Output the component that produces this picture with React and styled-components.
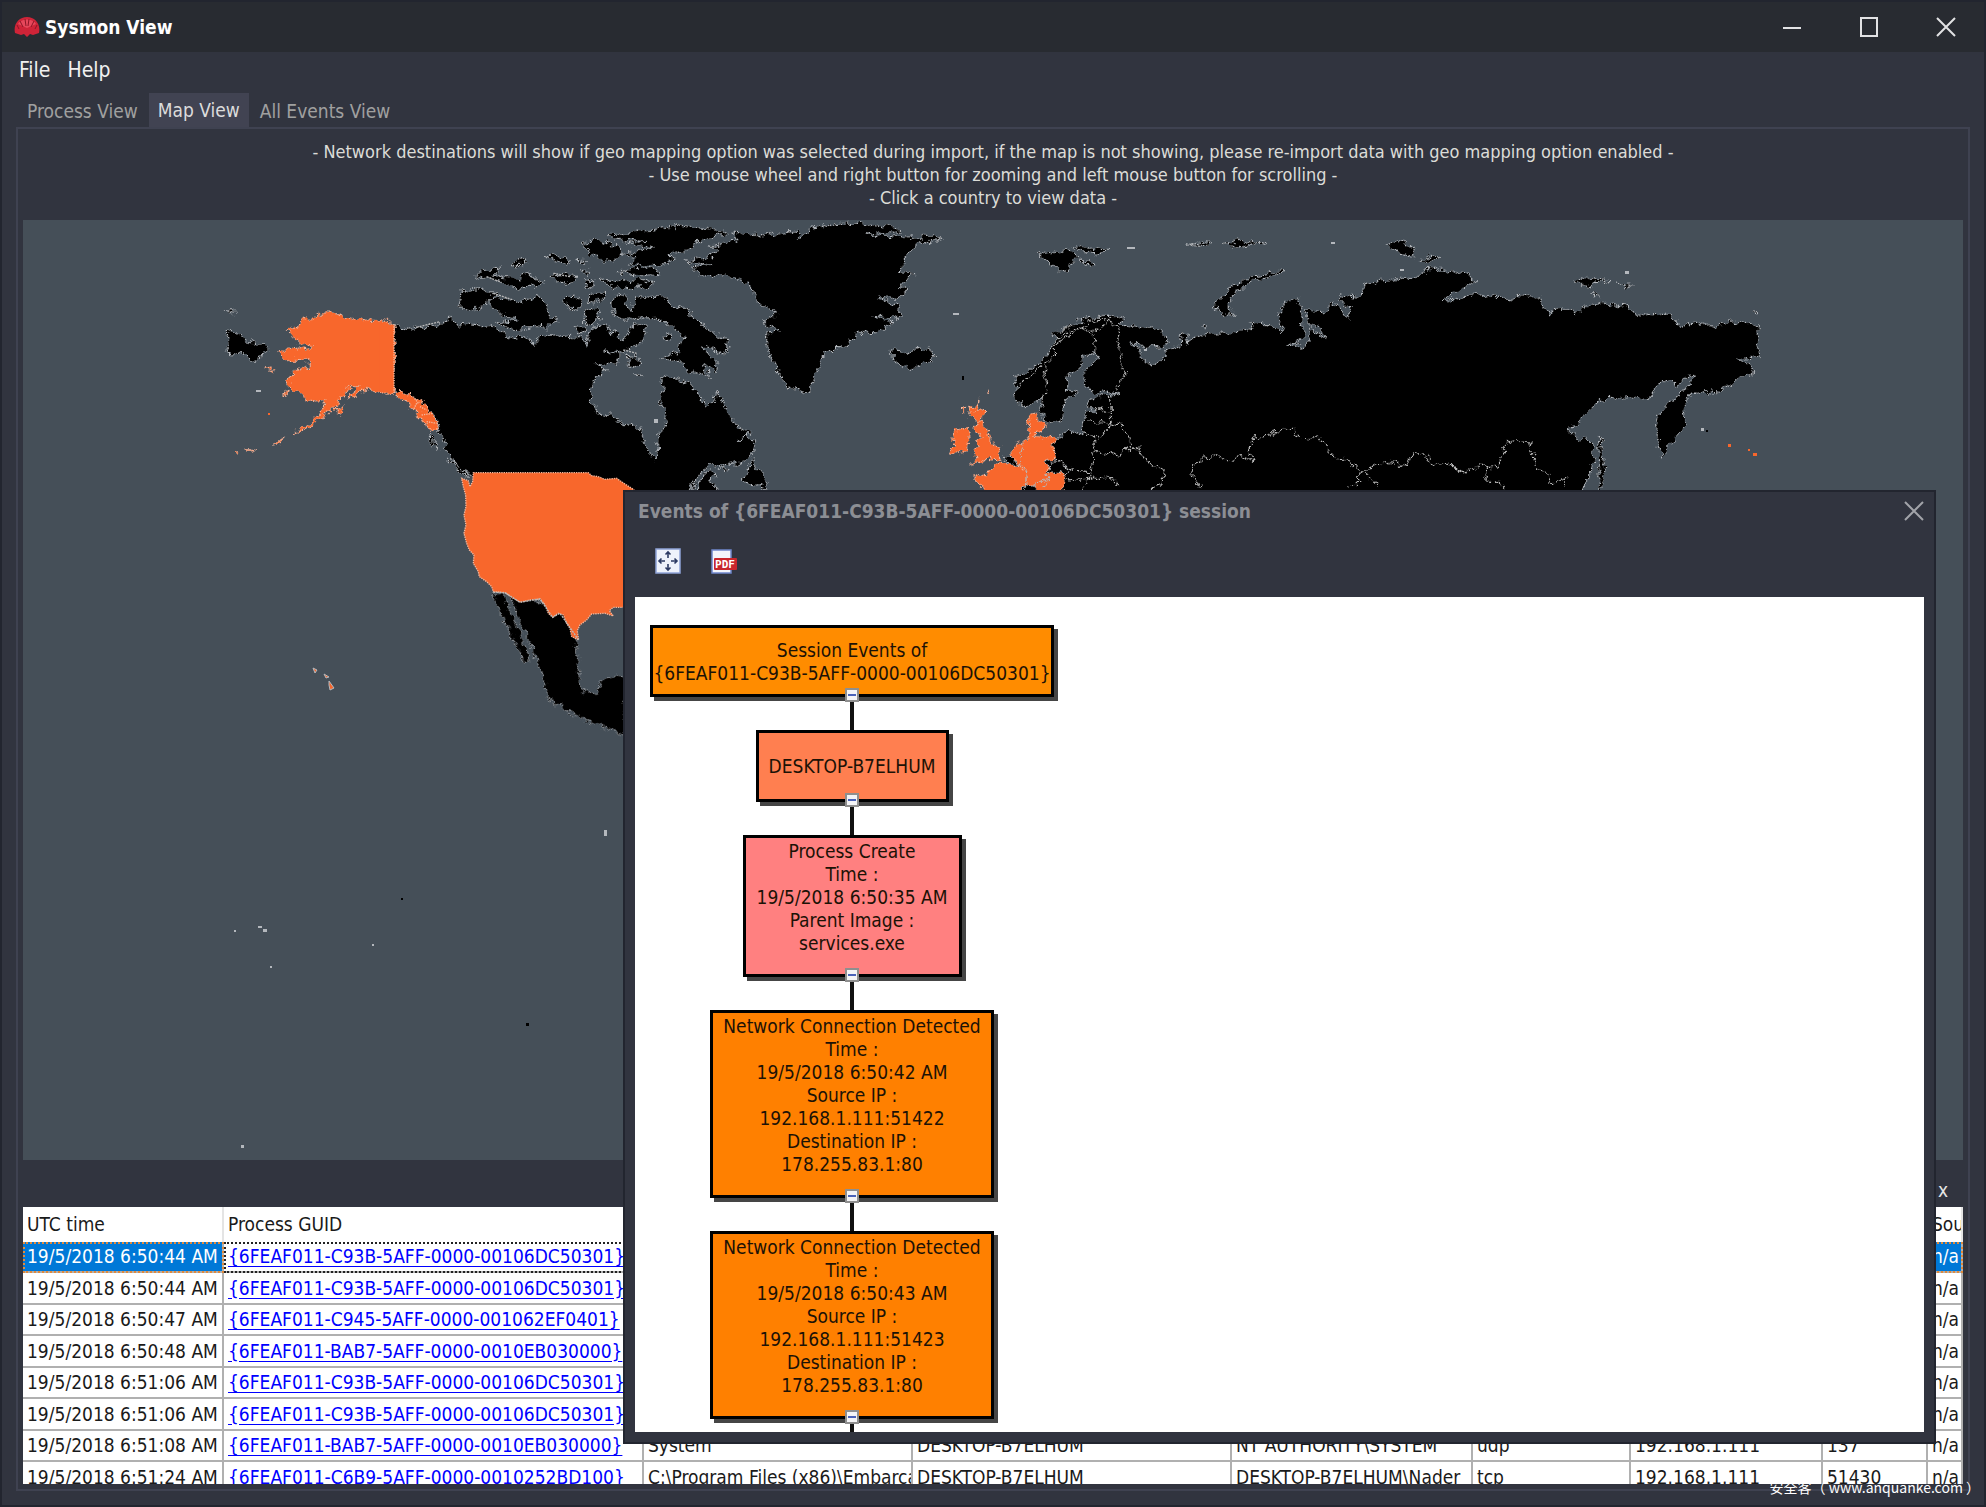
import React from "react";
import styled, { createGlobalStyle } from "styled-components";

const colors = {
  frame: "#22252f",
  titleBar: "#282b31",
  body: "#31343f",
  line: "#3f4251",
  tab: "#414352",
  sea: "#454f58",
  land: "#000000",
  hit: "#f8672c",
  coast: "#b4b8bd",
  select: "#0078d7",
  link: "#0000ff",
};

const GUID = "{6FEAF011-C93B-5AFF-0000-00106DC50301}";

const rows = [
  { time: "19/5/2018 6:50:44 AM", guid: GUID, selected: true },
  { time: "19/5/2018 6:50:44 AM", guid: GUID },
  { time: "19/5/2018 6:50:47 AM", guid: "{6FEAF011-C945-5AFF-0000-001062EF0401}" },
  { time: "19/5/2018 6:50:48 AM", guid: "{6FEAF011-BAB7-5AFF-0000-0010EB030000}" },
  { time: "19/5/2018 6:51:06 AM", guid: GUID },
  { time: "19/5/2018 6:51:06 AM", guid: GUID },
  {
    time: "19/5/2018 6:51:08 AM",
    guid: "{6FEAF011-BAB7-5AFF-0000-0010EB030000}",
    image: "System",
    computer: "DESKTOP-B7ELHUM",
    user: "NT AUTHORITY\\SYSTEM",
    protocol: "udp",
    ip: "192.168.1.111",
    port: "137",
  },
  {
    time: "19/5/2018 6:51:24 AM",
    guid: "{6FEAF011-C6B9-5AFF-0000-0010252BD100}",
    image: "C:\\Program Files (x86)\\Embarcadero",
    computer: "DESKTOP-B7ELHUM",
    user: "DESKTOP-B7ELHUM\\Nader",
    protocol: "tcp",
    ip: "192.168.1.111",
    port: "51430",
  },
];

const columnWidths = [201, 420, 269, 319, 241, 158, 192, 105];

const nodes = [
  { width: 404, height: 72, color: "#ff8c00", pad: 11, lines: ["Session Events of", GUID] },
  { width: 193, height: 72, color: "#ff7f50", pad: 22, lines: ["DESKTOP-B7ELHUM"] },
  {
    width: 219,
    height: 142,
    color: "#ff8080",
    pad: 2,
    lines: ["Process Create", "Time :", "19/5/2018 6:50:35 AM", "Parent Image :", "services.exe"],
  },
  {
    width: 284,
    height: 188,
    color: "#ff8000",
    pad: 2,
    lines: [
      "Network Connection Detected",
      "Time :",
      "19/5/2018 6:50:42 AM",
      "Source IP :",
      "192.168.1.111:51422",
      "Destination IP :",
      "178.255.83.1:80",
    ],
  },
  {
    width: 284,
    height: 188,
    color: "#ff8000",
    pad: 2,
    lines: [
      "Network Connection Detected",
      "Time :",
      "19/5/2018 6:50:43 AM",
      "Source IP :",
      "192.168.1.111:51423",
      "Destination IP :",
      "178.255.83.1:80",
    ],
  },
];

const ShellIcon = () => (
  <svg width="26" height="22" viewBox="0 0 26 22" aria-hidden="true">
    <path
      d="M1 17 C-1 8 5 1 13 1 C21 1 27 8 25 17 L19 19 L16 18 L13 21 L10 18 L7 19 Z"
      fill="#cf2438"
    />
    <path d="M4 8 C7 2 19 2 22 8 L13 12 Z" fill="#e6475a" />
    <path
      d="M5 13 L3 9 M9 11 L6 5 M12 10 L11 3 M14 10 L15 3 M17 11 L20 5 M21 13 L23 9"
      stroke="#8d1526"
      strokeWidth="1"
    />
  </svg>
);

const FitIcon = () => (
  <svg width="26" height="26" viewBox="0 0 26 26" aria-hidden="true">
    <rect x="1" y="1" width="24" height="24" fill="#eef2fb" stroke="#8fa3d8" strokeWidth="1.5" />
    <g stroke="#2c3a63" strokeWidth="1.6" fill="none">
      <path d="M13 4 V10 M10.500 6.500 L13 4 L15.500 6.500" />
      <path d="M13 22 V16 M10.500 19.500 L13 22 L15.500 19.500" />
      <path d="M4 13 H10 M6.500 10.500 L4 13 L6.500 15.500" />
      <path d="M22 13 H16 M19.500 10.500 L22 13 L19.500 15.500" />
    </g>
  </svg>
);

const PdfIcon = () => (
  <svg width="26" height="26" viewBox="0 0 26 26" aria-hidden="true">
    <path d="M1 2 H20 V25 H1 Z" fill="#f4f6fc" stroke="#6f86cc" strokeWidth="1.5" />
    <rect x="3" y="10" width="23" height="12" rx="1" fill="#c8262c" />
    <text
      x="14"
      y="20"
      fill="#ffffff"
      fontFamily="'DejaVu Sans Mono', monospace"
      fontSize="11"
      fontWeight="700"
      textAnchor="middle"
    >
      PDF
    </text>
  </svg>
);

const CloseIcon = () => (
  <svg width="20" height="20" viewBox="0 0 20 20" aria-hidden="true">
    <path d="M1 1 L19 19 M19 1 L1 19" stroke="currentColor" strokeWidth="2" />
  </svg>
);

const MinimizeIcon = () => (
  <svg width="20" height="20" viewBox="0 0 20 20" aria-hidden="true">
    <path d="M1 11 H19" stroke="currentColor" strokeWidth="2" />
  </svg>
);

const MaximizeIcon = () => (
  <svg width="20" height="20" viewBox="0 0 20 20" aria-hidden="true">
    <rect x="2" y="1" width="16" height="18" fill="none" stroke="currentColor" strokeWidth="2" />
  </svg>
);

const WorldMap = () => (
  <MapSvg viewBox="23 220 1940 940" preserveAspectRatio="xMidYMid slice" role="img" aria-label="World map">
    <defs>
      <filter id="rough" x="-5%" y="-5%" width="110%" height="110%" colorInterpolationFilters="sRGB">
        <feTurbulence type="fractalNoise" baseFrequency="0.14" numOctaves="3" seed="7" result="noise" />
        <feDisplacementMap in="SourceGraphic" in2="noise" scale="10" xChannelSelector="R" yChannelSelector="G" />
      </filter>
    </defs>

    {/* north america */}
    <g filter="url(#rough)">
      <Land transform="translate(440 210) scale(0.3333)">
        <path d="M-138 342 L-90 360 L-60 352 L0 345 L30 325 L45 345 L100 343 L150 345 L190 370 L200 382 L260 378 L285 404 L300 378 L340 378 L420 380 L437 402 L445 370 L470 345 L500 350 L515 375 L525 360 L545 395 L560 380 L575 345 L610 345 L620 375 L600 402 L575 408 L555 430 L490 422 L540 435 L535 462 L465 465 L500 480 L470 500 L450 545 L455 575 L470 590 L480 615 L510 615 L560 645 L605 658 L610 700 L630 735 L650 750 L655 720 L650 680 L675 650 L680 610 L662 580 L670 540 L665 500 L720 505 L760 530 L775 555 L795 590 L820 580 L832 545 L850 575 L870 625 L900 655 L930 670 L890 695 L920 680 L945 700 L940 730 L895 762 L810 765 L770 800 L755 840 L750 870 L550 870 L300 830 L90 795 L65 780 L45 755 L20 720 L10 690 L0 650 L-15 620 L-50 590 L-85 560 L-138 545 Z" />
        <path d="M70 240 L130 240 L180 252 L150 268 L125 290 L95 305 L55 288 Z" />
        <path d="M145 270 L190 265 L240 275 L290 260 L320 280 L325 315 L355 335 L330 350 L270 350 L220 362 L170 340 L230 325 L185 315 L150 292 Z" />
        <path d="M100 200 L140 178 L180 175 L160 195 L200 200 L240 210 L265 185 L280 205 L310 212 L290 228 L210 232 L180 210 L130 205 Z" />
        <path d="M215 160 L245 145 L260 155 L230 170 Z M315 135 L350 135 L390 150 L385 162 L335 150 Z M410 150 L440 152 L430 162 Z M330 200 L370 190 L410 200 L400 222 L350 215 Z" />
        <path d="M430 100 L470 90 L530 105 L545 125 L525 152 L490 150 L450 130 Z" />
        <path d="M500 75 L610 65 L700 48 L800 55 L870 68 L800 85 L740 120 L690 130 L700 150 L650 170 L570 165 L590 140 L540 130 L640 115 L560 100 L620 90 L520 88 Z" />
        <path d="M540 185 L600 170 L660 185 L640 195 L560 192 Z M480 205 L530 215 L600 208 L640 215 L630 230 L520 235 Z M425 180 L450 185 L445 195 Z M435 210 L460 210 L462 230 L440 228 Z" />
        <path d="M365 270 L395 255 L425 270 L415 300 L385 290 Z M440 255 L495 248 L490 265 L460 278 L445 272 Z M435 300 L465 295 L480 325 L455 345 L432 330 Z" />
        <path d="M515 285 L525 260 L560 252 L555 285 L575 305 L590 260 L640 262 L665 258 L700 290 L745 300 L770 330 L800 360 L850 385 L870 405 L850 438 L800 405 L790 420 L830 455 L832 485 L790 465 L810 500 L750 485 L720 455 L665 450 L680 435 L720 430 L715 405 L735 385 L700 350 L650 325 L560 330 L520 310 Z" />
        <path d="M675 375 L695 370 L700 388 L680 392 Z M565 435 L590 440 L605 460 L575 475 L560 455 Z M590 492 L608 492 L600 500 Z M400 345 L440 350 L430 375 L410 370 Z" />
        <path d="M770 830 L800 785 L835 795 L805 810 L830 830 L830 870 L770 870 Z M905 810 L925 780 L940 740 L945 775 L970 790 L985 835 L950 825 L915 820 Z M840 770 L870 778 L850 782 Z" />
        <path d="M-30 670 L-15 695 L-10 718 L-28 700 Z M25 750 L60 770 L85 800 L55 785 Z" />
      </Land>

      {/* greenland and iceland */}
      <Land transform="translate(440 210) scale(0.3333)">
        <path d="M730 152 L815 140 L840 120 L810 108 L890 92 L880 70 L980 75 L1070 66 L1085 80 L1110 55 L1190 40 L1260 40 L1360 50 L1385 65 L1280 72 L1420 82 L1495 80 L1490 92 L1430 103 L1395 140 L1380 190 L1425 188 L1410 205 L1380 225 L1405 235 L1375 265 L1310 262 L1380 290 L1380 325 L1300 320 L1355 335 L1345 350 L1300 370 L1250 370 L1220 405 L1190 415 L1150 435 L1130 480 L1105 550 L1045 530 L1010 480 L980 410 L980 370 L1015 365 L970 335 L1010 310 L950 280 L940 235 L905 210 L850 195 L790 198 L750 175 L810 165 Z" />
        <path d="M1350 430 L1365 412 L1385 430 L1420 420 L1470 415 L1485 440 L1420 475 L1380 465 Z" />
      </Land>

      {/* siberian tip west of the date line */}
      <Land transform="translate(200 210) scale(0.3333)">
        <path d="M82 360 L110 368 L150 400 L185 402 L208 415 L165 455 L130 435 L85 430 Z M82 302 L112 304 L90 310 Z" />
      </Land>

      <Land $hit transform="translate(200 210) scale(0.3333)">
        <path d="M582 342 L550 333 L500 330 L440 320 L380 303 L360 315 L310 328 L295 350 L255 362 L280 378 L305 402 L335 407 L320 420 L285 408 L235 428 L260 452 L325 450 L325 470 L275 485 L260 515 L280 540 L310 548 L315 575 L375 572 L365 600 L340 630 L280 668 L300 665 L360 628 L400 595 L425 560 L455 522 L470 530 L445 565 L490 545 L510 530 L540 548 L582 550 L600 545 L640 560 L665 570 L690 605 L715 640 L718 660 L690 660 L660 620 L620 575 L582 556 Z" />
        <path d="M188 470 L222 482 L208 484 Z M245 548 L268 545 L258 553 Z M405 600 L435 588 L420 618 Z M220 702 L255 684 L240 698 Z M140 720 L172 720 L150 724 Z M103 726 L115 730 L105 732 Z" />
      </Land>

      {/* mexico and central america */}
      <Land $fine transform="scale(1.2666)">
        <path d="M389 468 L398 470 L402 482 L410 498 L418 520 L414 522 L407 508 L400 494 L394 482 Z" />
        <path d="M403 470 L420 472 L445 480 L455 503 L456 525 L459 545 L470 548 L476 536 L492 533 L498 545 L492 556 L498 585 L485 576 L470 572 L450 562 L432 552 L430 538 L422 516 L410 490 Z" />
      </Land>
    </g>

    <Land $hit transform="translate(200 210) scale(0.3333)">
      <path d="M582 345 V550 L540 546 V345 Z" stroke="none" />
      <path d="M582 342 V550" />
      <path d="M820 788 H1165 L1175 797 L1195 800 L1215 808 L1250 805 L1275 822 L1300 838 L1320 860 V1190 L1268 1192 L1240 1192 L1228 1202 L1240 1218 L1215 1210 L1175 1212 L1160 1230 L1140 1245 L1132 1262 L1136 1290 L1115 1280 L1110 1255 L1100 1240 L1090 1215 L1075 1210 L1058 1222 L1045 1210 L1036 1185 L1020 1167 L990 1170 L960 1177 L935 1162 L915 1148 L880 1145 L875 1130 L860 1115 L838 1100 L835 1085 L820 1060 L822 1035 L808 1020 L800 1000 L792 970 L798 945 L792 915 L798 890 L797 855 L790 830 L785 805 L805 812 L810 830 L818 815 Z" />
      <path d="M640 560 L655 580 M660 590 L680 600 M665 615 L700 610 M680 635 L710 640 M650 580 L640 600" />
    </Land>

    {/* europe and asia */}
    <g filter="url(#rough)">
      <Land transform="translate(920 210) scale(0.3333)">
        <path d="M280 510 L330 480 L370 450 L390 420 L410 385 L395 370 L440 350 L500 325 L560 315 L610 325 L600 345 L690 352 L725 370 L745 395 L730 415 L680 412 L630 395 L660 420 L665 450 L700 465 L735 440 L735 420 L790 405 L780 370 L805 370 L800 395 L840 380 L870 368 L930 370 L1000 355 L990 340 L1050 345 L1095 365 L1075 310 L1100 275 L1130 262 L1145 290 L1145 350 L1155 370 L1140 395 L1100 405 L1140 415 L1170 390 L1170 352 L1215 385 L1200 350 L1165 345 L1160 300 L1210 305 L1240 280 L1285 325 L1290 290 L1250 265 L1260 255 L1320 262 L1335 222 L1400 210 L1490 200 L1545 170 L1580 188 L1640 190 L1665 215 L1610 245 L1565 275 L1660 255 L1720 255 L1770 270 L1805 258 L1860 265 L1870 295 L1890 315 L1910 295 L1980 305 L2010 280 L2060 277 L2090 290 L2125 290 L2150 315 L2250 313 L2280 345 L2360 342 L2390 355 L2410 335 L2480 340 L2515 350 V440 L2450 447 L2490 460 L2508 495 L2480 490 L2440 515 L2395 548 L2310 550 L2290 600 L2295 640 L2260 690 L2225 740 L2212 680 L2210 620 L2260 570 L2310 525 L2330 495 L2300 500 L2270 530 L2260 512 L2225 512 L2180 570 L2130 560 L2040 568 L1990 625 L1945 660 L1975 690 L2005 680 L2022 710 L2015 780 L1985 840 V870 H370 L385 790 L380 755 L405 745 L400 690 L445 665 L490 672 L485 635 L500 600 L530 610 L505 580 L525 562 L600 548 L560 545 L520 550 L495 535 L490 490 L540 435 L520 425 L490 440 L480 475 L440 500 L440 540 L475 545 L430 575 L430 615 L395 648 L370 620 L362 570 L310 592 L290 570 L285 530 Z" />
        <path d="M880 292 L905 262 L940 225 L1000 198 L1090 182 L1092 192 L1010 210 L960 235 L935 262 L925 290 L945 318 L910 310 Z" />
        <path d="M355 125 L400 128 L440 118 L475 140 L430 185 L400 170 L365 145 Z M455 110 L520 115 L565 115 L545 130 L490 125 Z M485 150 L525 162 L515 172 L490 165 Z" />
        <path d="M0 80 L40 78 L65 85 L20 98 L0 105 Z M845 345 L860 350 L850 358 Z M800 102 L870 98 L865 108 Z M910 100 L960 90 L1000 98 L1050 97 L1000 105 L940 108 Z" />
        <path d="M1400 105 L1430 92 L1455 95 L1460 105 L1490 122 L1480 140 L1440 130 Z M1500 148 L1540 135 L1560 148 L1530 155 Z M1970 210 L2000 205 L2070 212 L2020 222 L1990 230 Z M2090 218 L2140 225 L2120 230 Z M2015 248 L2045 260 L2025 260 Z M2503 305 L2515 305 L2507 313 Z" />
        <path d="M2036 680 L2044 690 L2055 780 L2044 840 V870 H2034 L2040 800 Z" />
      </Land>
      <Land $hit transform="translate(920 210) scale(0.3333)">
        <path d="M150 590 L178 582 L165 602 L195 605 L180 635 L200 660 L215 700 L240 712 L235 745 L190 750 L150 765 L175 740 L160 720 L180 705 L160 695 L185 680 L160 655 L172 635 L150 620 Z" />
        <path d="M95 675 L115 655 L145 658 L150 680 L140 720 L100 735 L88 728 L105 705 Z" />
        <path d="M322 630 L350 605 L355 635 L375 640 L370 662 L345 665 L345 682 L372 685 L400 675 L405 745 L380 755 L385 785 L435 795 L432 825 L420 870 H210 L190 830 L160 800 L200 790 L240 750 L262 762 L300 775 L270 735 L285 705 L330 690 Z" />
        <path d="M200 545 L206 540 L204 550 Z M178 568 L180 575 L174 575 Z M128 592 L136 590 L128 610 Z" />
      </Land>
      <Land transform="translate(920 210) scale(0.3333)">
        <path d="M255 742 L275 742 L296 765 L280 768 L262 755 Z M380 756 L410 752 L455 778 L430 792 L390 788 Z M305 840 L320 825 L345 825 L350 870 H305 Z" />
      </Land>

      {/* country borders */}
      <Borders transform="translate(920 210) scale(0.3333)">
        <path d="M365 570 L380 545 L372 500 L375 465 L400 440 L400 410 L430 385 L480 360 L515 370 L528 425" />
        <path d="M485 355 L540 365 L560 335 L590 345 L595 400 L605 470 L620 490 L585 540" />
        <path d="M400 395 L430 370 L490 350 L520 330 L580 325 M290 530 L330 500 L360 470 M420 360 L470 345" />
        <path d="M572 555 L575 640 L600 640 L635 695 L615 720 L655 715 L680 755 L732 780 L725 820 L690 840" />
        <path d="M488 632 L545 635 L560 645 L575 640 L545 685 L520 680 L490 665 M520 680 L525 725 L600 738 L615 720 M525 725 L505 805 L440 810 M410 752 L455 780 L505 785 M505 805 L560 805 L575 800 L600 840 M505 805 L490 840" />
        <path d="M525 600 L545 595 L570 608" />
        <path d="M845 840 L815 790 L820 765 L875 735 L920 750 L960 740 L1000 750 L985 720 L1000 685 L1050 675 L1100 655 L1125 655 L1130 678 L1165 690 L1195 678 L1225 720 L1240 745 L1275 745 L1330 785 L1395 755 L1420 760 L1465 770 L1480 725 L1520 740 L1535 765 L1580 760 L1630 788 L1680 765 L1735 775 L1755 700 L1790 690 L1830 700 L1850 770 L1880 790 L1895 820 L1940 805 L1935 840" />
        <path d="M1465 770 L1470 740 L1480 725 M1580 760 L1600 775 L1630 788" />
        <path d="M1330 785 L1310 800 L1320 820 L1275 835 M1335 790 L1375 830 M1710 775 L1695 810 L1735 815 L1755 835" />
        <path d="M300 700 L310 730 L295 760 L320 785 L315 840 M380 790 L390 800 L345 825 M390 800 L370 830" />
      </Borders>
    </g>
    <Borders transform="translate(200 210) scale(0.3333)">
      <path d="M880 1147 L915 1148 L960 1177 L1020 1167 L1058 1222 L1080 1210 L1136 1290" />
      <path d="M650 352 L720 335 M880 250 L940 270 M860 200 L900 215 M1060 190 L1110 200 M1270 420 L1310 430" />
    </Borders>

    {/* small islands */}
    <g fill={colors.coast}>
      <rect x="604" y="830" width="3" height="6" />
      <rect x="234" y="930" width="2" height="2" />
      <rect x="258" y="926" width="4" height="2" />
      <rect x="263" y="929" width="4" height="3" />
      <rect x="270" y="966" width="2" height="2" />
      <rect x="372" y="944" width="2" height="2" />
      <rect x="241" y="1145" width="3" height="3" />
      <rect x="953" y="313" width="6" height="2" />
      <rect x="256" y="390" width="5" height="2" />
      <rect x="654" y="419" width="4" height="4" />
      <rect x="1701" y="428" width="3" height="3" />
      <rect x="1127" y="247" width="8" height="2" />
      <rect x="1331" y="242" width="4" height="2" />
      <rect x="1400" y="269" width="4" height="2" />
      <rect x="1625" y="271" width="4" height="3" />
    </g>
    <g fill={colors.land}>
      <rect x="526" y="1023" width="3" height="3" />
      <rect x="401" y="898" width="2" height="2" />
      <rect x="962" y="376" width="2" height="4" />
      <rect x="1706" y="430" width="2" height="2" />
    </g>
    <g fill={colors.hit}>
      <path d="M313 668 l4 2 l-2 3 Z M324 674 l5 3 l-3 1 Z M329 681 l5 7 l-4 2 l-1 -5 Z" stroke={colors.coast} />
      <rect x="1728" y="444" width="3" height="3" />
      <rect x="1748" y="449" width="2" height="2" />
      <rect x="1753" y="453" width="4" height="3" />
      <rect x="268" y="413" width="2" height="2" />
    </g>
  </MapSvg>
);

const SessionNode = ({ node }) => (
  <>
    <NodeBox $width={node.width} $height={node.height} $color={node.color} $pad={node.pad}>
      {node.lines.map((line) => (
        <span key={line}>{line}</span>
      ))}
    </NodeBox>
    <Connector>
      <Toggle type="button" aria-label="Collapse" />
    </Connector>
  </>
);

const App = () => {
  return (
    <>
      <GlobalStyle />
      <Window>
        <TitleBar>
          <ShellIcon />
          <AppTitle>Sysmon View</AppTitle>
          <WindowButton type="button" aria-label="Minimize">
            <MinimizeIcon />
          </WindowButton>
          <WindowButton type="button" aria-label="Maximize">
            <MaximizeIcon />
          </WindowButton>
          <WindowButton type="button" aria-label="Close">
            <CloseIcon />
          </WindowButton>
        </TitleBar>
        <MenuBar>
          <MenuButton type="button">File</MenuButton>
          <MenuButton type="button">Help</MenuButton>
        </MenuBar>
        <Tabs role="tablist">
          <Tab type="button" role="tab">
            Process View
          </Tab>
          <Tab type="button" role="tab" aria-selected="true" $active>
            Map View
          </Tab>
          <Tab type="button" role="tab">
            All Events View
          </Tab>
        </Tabs>
        <Panel>
          <Notes>
            <p>
              - Network destinations will show if geo mapping option was selected during import, if the map is not
              showing, please re-import data with geo mapping option enabled -
            </p>
            <p>- Use mouse wheel and right button for zooming and left mouse button for scrolling -</p>
            <p>- Click a country to view data -</p>
          </Notes>
          <MapArea>
            <WorldMap />
          </MapArea>
          <GridHeader>
            <GridClose type="button">x</GridClose>
          </GridHeader>
          <GridWrap>
            <Grid>
              <colgroup>
                {columnWidths.map((width, i) => (
                  <Col key={i} $width={width} />
                ))}
                <col />
              </colgroup>
              <thead>
                <tr>
                  <Th>UTC time</Th>
                  <Th>Process GUID</Th>
                  <Th />
                  <Th />
                  <Th />
                  <Th />
                  <Th />
                  <Th />
                  <Th>Source</Th>
                </tr>
              </thead>
              <tbody>
                {rows.map((row, i) => (
                  <Row key={i}>
                    <Td $selected={row.selected}>{row.time}</Td>
                    <Td $focused={row.selected}>
                      <GuidLink href="#session">{row.guid}</GuidLink>
                    </Td>
                    <Td $selected={row.selected}>{row.image}</Td>
                    <Td $selected={row.selected}>{row.computer}</Td>
                    <Td $selected={row.selected}>{row.user}</Td>
                    <Td $selected={row.selected}>{row.protocol}</Td>
                    <Td $selected={row.selected}>{row.ip}</Td>
                    <Td $selected={row.selected}>{row.port}</Td>
                    <Td $selected={row.selected}>n/a</Td>
                  </Row>
                ))}
              </tbody>
            </Grid>
          </GridWrap>
        </Panel>

        <Dialog role="dialog" aria-labelledby="session-title">
          <DialogHeader>
            <DialogTitle id="session-title">Events of {GUID} session</DialogTitle>
            <DialogClose type="button" aria-label="Close">
              <CloseIcon />
            </DialogClose>
          </DialogHeader>
          <Toolbar>
            <ToolButton type="button" aria-label="Fit to window">
              <FitIcon />
            </ToolButton>
            <ToolButton type="button" aria-label="Export to PDF">
              <PdfIcon />
            </ToolButton>
          </Toolbar>
          <Canvas>
            <Tree>
              {nodes.map((node, i) => (
                <SessionNode key={i} node={node} />
              ))}
            </Tree>
          </Canvas>
        </Dialog>
        <Watermark>安全客（ www.anquanke.com ）</Watermark>
      </Window>
    </>
  );
};

export default App;

const GlobalStyle = createGlobalStyle`
  * {
    box-sizing: border-box;
  }

  body {
    margin: 0;
    background-color: ${colors.body};
    font-family: "DejaVu Sans Condensed", "DejaVu Sans", sans-serif;
    font-stretch: condensed;
    font-size: 19px;
    line-height: 23px;
  }

  button {
    padding: 0;
    border: none;
    background-color: transparent;
    font: inherit;
    cursor: pointer;
  }

  p {
    margin: 0;
  }
`;

const Window = styled.div`
  position: relative;
  display: flex;
  flex-direction: column;
  height: 100vh;
  min-height: 1200px;
  padding-bottom: 14px;
  border: 2px solid ${colors.frame};
  background-color: ${colors.body};
  color: #ffffff;
`;

const TitleBar = styled.header`
  display: flex;
  align-items: center;
  height: 50px;
  padding-left: 12px;
  background-color: ${colors.titleBar};
`;

const AppTitle = styled.h1`
  flex: 1;
  margin: 0 0 0 5px;
  font-size: 19px;
  font-weight: 700;
`;

const WindowButton = styled.button`
  display: flex;
  align-items: center;
  justify-content: center;
  width: 77px;
  height: 50px;
  color: #e2e2e4;
`;

const MenuBar = styled.nav`
  display: flex;
  gap: 17px;
  height: 41px;
  padding: 6px 17px;
`;

const MenuButton = styled.button`
  height: 24px;
  color: #f0f0f0;
  font-size: 21px;
`;

const Tabs = styled.div`
  display: flex;
  align-items: flex-end;
  padding-left: 14px;
`;

const Tab = styled.button`
  height: ${({ $active }) => ($active ? "34px" : "32px")};
  padding: ${({ $active }) => ($active ? "0 9px" : "1px 11px 0")};
  background-color: ${({ $active }) => ($active ? colors.tab : "transparent")};
  color: ${({ $active }) => ($active ? "#dcdcdc" : "#a0a0a0")};
`;

const Panel = styled.main`
  display: flex;
  flex: 1;
  flex-direction: column;
  min-height: 0;
  margin: 0 14px;
  padding: 0 5px 5px;
  border: 2px solid ${colors.line};
`;

const Notes = styled.div`
  padding: 11px 0;
  color: #dcdcd8;
  font-size: 18px;
  text-align: center;
`;

const MapArea = styled.div`
  display: flex;
  flex: 1;
  min-height: 0;
  background-color: ${colors.sea};
`;

const MapSvg = styled.svg`
  width: 100%;
  height: 100%;
`;

const Land = styled.g`
  fill: ${({ $hit }) => ($hit ? colors.hit : colors.land)};
  stroke: ${({ $hit }) => ($hit ? "#f3b79d" : colors.coast)};
  stroke-width: ${({ $fine }) => ($fine ? 1 : 4)};
  stroke-dasharray: ${({ $fine }) => ($fine ? "1 1" : "4 3")};
`;

const Borders = styled.g`
  fill: none;
  stroke: #b9b9b9;
  stroke-width: 4;
  stroke-dasharray: 6 3;
`;

const GridHeader = styled.div`
  display: flex;
  justify-content: flex-end;
  height: 47px;
  padding: 19px 15px 0 0;
`;

const GridClose = styled.button`
  height: 23px;
  color: #e6e6e6;
`;

const GridWrap = styled.div`
  height: 277px;
  overflow: hidden;
  background-color: #ffffff;
  color: #1a1a1a;
`;

const Grid = styled.table`
  width: 100%;
  table-layout: fixed;
  border-collapse: separate;
  border-spacing: 0;
`;

const Col = styled.col`
  width: ${({ $width }) => $width}px;
`;

const Th = styled.th`
  height: 35px;
  padding: 0 4px;
  overflow: hidden;
  border-right: 2px solid #e4e4e4;
  font-weight: 400;
  text-align: left;
  white-space: nowrap;
`;

const Row = styled.tr`
  height: 31px;

  &:nth-child(even) {
    height: 32px;
  }
`;

const Td = styled.td`
  padding: 0 4px;
  overflow: hidden;
  border-right: 2px solid #b0b0b0;
  border-bottom: 2px solid #b0b0b0;
  outline: ${({ $selected, $focused }) =>
    $focused ? "2px dotted #222222" : $selected ? "2px dotted #e08a3c" : "none"};
  outline-offset: -2px;
  background-color: ${({ $selected }) => ($selected ? colors.select : "#ffffff")};
  color: ${({ $selected }) => ($selected ? "#ffffff" : "inherit")};
  white-space: nowrap;
`;

const GuidLink = styled.a`
  color: ${colors.link};
  text-underline-offset: 3px;
`;

const Dialog = styled.section`
  position: absolute;
  top: 488px;
  right: 48px;
  bottom: 61px;
  left: 621px;
  display: flex;
  flex-direction: column;
  padding: 0 10px 10px;
  border: 2px solid ${colors.frame};
  background-color: ${colors.body};
`;

const DialogHeader = styled.div`
  display: flex;
  align-items: center;
  justify-content: space-between;
  height: 38px;
  padding-left: 3px;
`;

const DialogTitle = styled.h2`
  margin: 0;
  color: #8c8e94;
  font-size: 19px;
  font-weight: 700;
`;

const DialogClose = styled.button`
  display: flex;
  color: #a2a4a9;
`;

const Toolbar = styled.div`
  display: flex;
  gap: 30px;
  height: 67px;
  padding: 18px 20px;
`;

const ToolButton = styled.button`
  display: flex;
  width: 26px;
  height: 26px;
`;

const Canvas = styled.div`
  flex: 1;
  min-height: 0;
  padding: 28px 15px 0;
  overflow: hidden;
  background-color: #ffffff;
`;

const Tree = styled.div`
  display: flex;
  flex-direction: column;
  align-items: center;
  width: 404px;
`;

const NodeBox = styled.div`
  display: flex;
  flex: none;
  flex-direction: column;
  align-items: center;
  width: ${({ $width }) => $width}px;
  height: ${({ $height }) => $height}px;
  padding-top: ${({ $pad }) => $pad}px;
  border: 3px solid #000000;
  box-shadow: 4px 4px 0 #454545;
  background-color: ${({ $color }) => $color};
  color: #1c1206;
  white-space: nowrap;
`;

const Connector = styled.div`
  position: relative;
  flex: none;
  width: 4px;
  height: 33px;
  background-color: #111111;
`;

const Toggle = styled.button`
  position: absolute;
  top: -9px;
  left: -5px;
  width: 14px;
  height: 14px;
  border: 2px solid #8f8f8f;
  background: linear-gradient(#4a62b8, #4a62b8) center / 8px 2px no-repeat #f4f4f6;
`;

const Watermark = styled.div`
  position: absolute;
  right: 4px;
  bottom: 6px;
  color: #ffffff;
  font-family: "Noto Sans CJK SC", sans-serif;
  font-size: 14px;
`;
